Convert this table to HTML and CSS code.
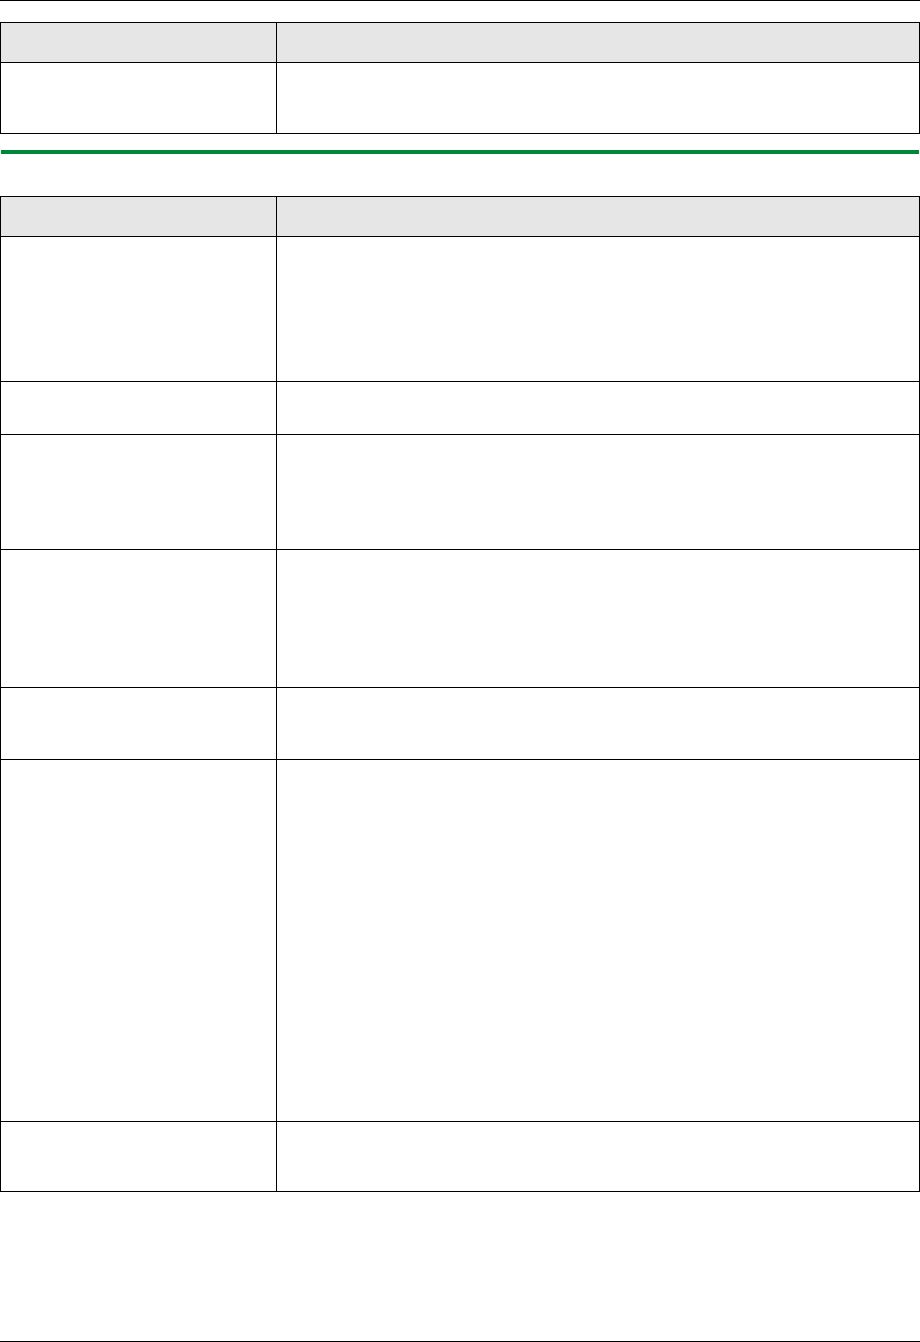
FILE: index.html
```html
<html>
    <head>
        <title>Tables</title>
        <link rel="stylesheet" href="styles.css">
    </head>

    <body>
        <div class="rule"></div>

        <div class="table first">
            <div class="row head"><div class="cell"></div><div class="cell"></div></div>
            <div class="row r71"><div class="cell"></div><div class="cell"></div></div>
        </div>

        <div class="green-bar"></div>

        <div class="table second">
            <div class="row head"><div class="cell"></div><div class="cell"></div></div>
            <div class="row r145"><div class="cell"></div><div class="cell"></div></div>
            <div class="row r53"><div class="cell"></div><div class="cell"></div></div>
            <div class="row r115"><div class="cell"></div><div class="cell"></div></div>
            <div class="row r138"><div class="cell"></div><div class="cell"></div></div>
            <div class="row r72"><div class="cell"></div><div class="cell"></div></div>
            <div class="row r362"><div class="cell"></div><div class="cell"></div></div>
            <div class="row r70"><div class="cell"></div><div class="cell"></div></div>
        </div>

        <div class="rule bottom"></div>
    </body>
</html>
```

FILE: styles.css
```css
* {
    box-sizing: border-box;
}

body {
    margin: 0;
    width: 920px;
    font-family: 'Liberation Sans', Arial, sans-serif;
    background: #fff;
}

.rule {
    height: 1px;
    background-color: #000;
}

.rule.bottom {
    margin-top: 149px;
}

.table {
    border: 1px solid #000;
    border-bottom: none;
}

.first {
    margin-top: 21px;
}

.second {
    margin-top: 42px;
}

.green-bar {
    margin: 16px 1px 0 1px;
    height: 4px;
    background-color: #00883a;
}

.row {
    display: grid;
    grid-template-columns: 276px 1fr;
    border-bottom: 1px solid #000;
}

.cell:first-child {
    border-right: 1px solid #000;
}

.head {
    height: 40px;
    background-color: #e6e6e6;
}

.r53 { height: 53px; }
.r70 { height: 70px; }
.r71 { height: 71px; }
.r72 { height: 72px; }
.r115 { height: 115px; }
.r138 { height: 138px; }
.r145 { height: 145px; }
.r362 { height: 362px; }
```
